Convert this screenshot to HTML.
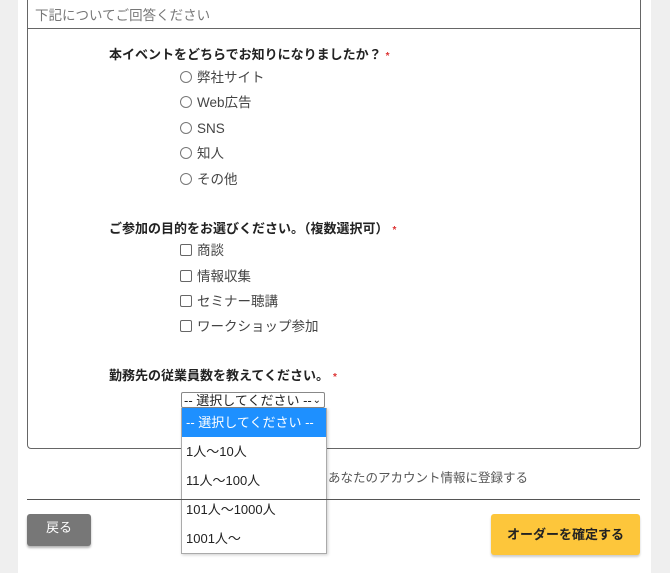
<!DOCTYPE html>
<html><head><meta charset="utf-8"><style>
body{margin:0;width:670px;height:573px;background:#efefef;font-family:"Liberation Sans","Noto Sans CJK JP",sans-serif;position:relative;overflow:hidden}
.page{position:absolute;left:18px;top:0;width:633px;height:573px;background:#fff}
.a{position:absolute;white-space:nowrap}
.box{position:absolute;left:27px;top:-5px;width:612px;height:452px;border:1px solid #666;border-radius:4px}
.hdr{position:absolute;left:27px;top:28px;width:613px;border-top:1px solid #666}
.q{font-size:13px;font-weight:bold;color:#222}
.q span{color:#d33;font-size:10px;margin-left:4px}
.o{font-size:13.5px;color:#444;line-height:16px}
.rd{display:inline-block;width:10px;height:10px;border:1px solid #777;border-radius:50%;vertical-align:-1px;margin-right:5px}
.cb{display:inline-block;width:10px;height:10px;border:1px solid #666;border-radius:2px;vertical-align:-1px;margin-right:5px}
.it{position:absolute;left:182px;width:144px;height:29px;font-size:13px;color:#222;line-height:29px;padding-left:4px;box-sizing:border-box}
</style></head><body>
<div class="page"></div>
<div class="box"></div>
<div class="hdr"></div>
<div class="a" style="left:35px;top:4px;font-size:13.5px;color:#777">下記についてご回答ください</div>
<div class="a q" style="left:109px;top:44px">本イベントをどちらでお知りになりましたか？<span>*</span></div>
<div class="a o" style="left:180px;top:70px"><i class="rd"></i>弊社サイト</div>
<div class="a o" style="left:180px;top:95px"><i class="rd"></i>Web広告</div>
<div class="a o" style="left:180px;top:121px"><i class="rd"></i>SNS</div>
<div class="a o" style="left:180px;top:146px"><i class="rd"></i>知人</div>
<div class="a o" style="left:180px;top:172px"><i class="rd"></i>その他</div>
<div class="a q" style="left:109px;top:218px">ご参加の目的をお選びください。（複数選択可）<span>*</span></div>
<div class="a o" style="left:180px;top:243px"><i class="cb"></i>商談</div>
<div class="a o" style="left:180px;top:269px"><i class="cb"></i>情報収集</div>
<div class="a o" style="left:180px;top:294px"><i class="cb"></i>セミナー聴講</div>
<div class="a o" style="left:180px;top:319px"><i class="cb"></i>ワークショップ参加</div>
<div class="a q" style="left:109px;top:365px">勤務先の従業員数を教えてください。<span>*</span></div>
<div class="a" style="left:181px;top:392px;width:144px;height:16px;border:1px solid #888;border-radius:2px;font-size:13px;line-height:15px;color:#222;padding-left:2px;box-sizing:border-box;overflow:hidden">-- 選択してください -- <span style="position:absolute;right:3px;font-size:10px">&#8964;</span></div>
<div class="a" style="left:181px;top:408px;width:146px;height:146px;background:#fff;border:1px solid #aaa;box-sizing:border-box;box-shadow:1px 1px 3px rgba(0,0,0,.2)"></div>
<div class="it" style="top:408px;background:#1e90ff;color:#fff">-- 選択してください --</div>
<div class="it" style="top:437px">1人～10人</div>
<div class="it" style="top:466px">11人～100人</div>
<div class="it" style="top:495px">101人～1000人</div>
<div class="it" style="top:524px">1001人～</div>
<div class="a" style="left:328px;top:467px;font-size:12.5px;color:#555">あなたのアカウント情報に登録する</div>
<div class="a" style="left:27px;top:499px;width:613px;border-top:1px solid #555"></div>
<div class="a" style="left:27px;top:514px;width:64px;height:32px;background:#777;border-radius:3px;box-shadow:0 2px 2px rgba(0,0,0,.3);color:#fff;font-size:13px;text-align:center;line-height:28px">戻る</div>
<div class="a" style="left:491px;top:514px;width:149px;height:41px;background:#fdc63b;border-radius:3px;box-shadow:0 2px 2px rgba(0,0,0,.2);color:#222;font-weight:bold;font-size:13px;text-align:center;line-height:41px">オーダーを確定する</div>
</body></html>
